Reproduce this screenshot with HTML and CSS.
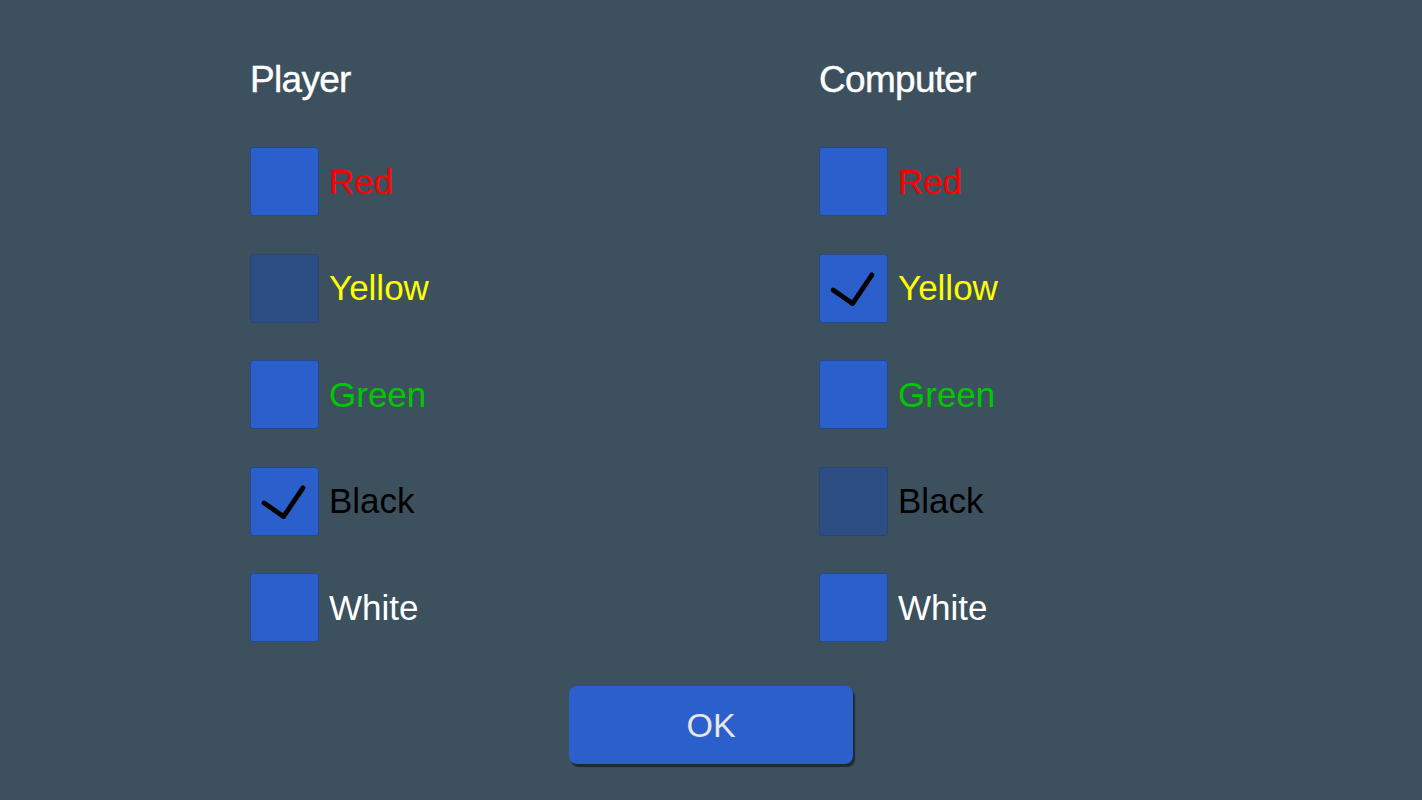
FILE: index.html
```html
<!DOCTYPE html>
<html>
<head>
<meta charset="utf-8">
<link rel="stylesheet" href="styles.css">
</head>
<body>
<div class="page">
  <div class="columns">
    <div class="col">
      <div class="title">Player</div>
      <div class="list">
        <div class="row"><div class="box"></div><span class="label red">Red</span></div>
        <div class="row"><div class="box dim"></div><span class="label yellow">Yellow</span></div>
        <div class="row"><div class="box"></div><span class="label green">Green</span></div>
        <div class="row"><div class="box"><svg class="check" viewBox="0 0 69 69"><polyline points="13.5,36 33.5,50 53.5,20.5"/></svg></div><span class="label black">Black</span></div>
        <div class="row"><div class="box"></div><span class="label white">White</span></div>
      </div>
    </div>
    <div class="col">
      <div class="title">Computer</div>
      <div class="list">
        <div class="row"><div class="box"></div><span class="label red">Red</span></div>
        <div class="row"><div class="box"><svg class="check" viewBox="0 0 69 69"><polyline points="13.5,36 33.5,50 53.5,20.5"/></svg></div><span class="label yellow">Yellow</span></div>
        <div class="row"><div class="box"></div><span class="label green">Green</span></div>
        <div class="row"><div class="box dim"></div><span class="label black">Black</span></div>
        <div class="row"><div class="box"></div><span class="label white">White</span></div>
      </div>
    </div>
  </div>
  <div class="actions">
    <button class="ok">OK</button>
  </div>
</div>
</body>
</html>
```
FILE: styles.css
```css
html, body {
  margin: 0;
  padding: 0;
  background: #3d505e;
  height: 100%;
  overflow: hidden;
}
.page {
  width: 1422px;
  height: 800px;
  font-family: "Liberation Sans", Arial, sans-serif;
  padding-top: 60px;
  box-sizing: border-box;
}
.columns {
  display: flex;
  padding-left: 250px;
}
.col {
  width: 569px;
}
.title {
  color: #ffffff;
  font-size: 37px;
  line-height: 40px;
  height: 40px;
  letter-spacing: -0.7px;
  -webkit-text-stroke: 0.4px #ffffff;
}
.list {
  margin-top: 47px;
  display: flex;
  flex-direction: column;
  gap: 37.5px;
}
.row {
  display: flex;
  align-items: center;
  height: 69px;
}
.box {
  width: 69px;
  height: 69px;
  box-sizing: border-box;
  background: #2b5fcc;
  border: 1px solid #24498f;
  border-radius: 3px;
  flex: none;
}
.box.dim {
  background: #2d4e85;
  border-color: #2a4574;
}
.check {
  display: block;
  width: 67px;
  height: 67px;
}
.check polyline {
  fill: none;
  stroke: #000000;
  stroke-width: 5;
  stroke-linecap: round;
  stroke-linejoin: round;
}
.label {
  margin-left: 10px;
  font-size: 35px;
  line-height: 40px;
}
.red { color: #ff0000; }
.yellow { color: #ffff00; }
.green { color: #00c800; }
.black { color: #000000; }
.white { color: #ffffff; }
.actions {
  display: flex;
  justify-content: center;
  margin-top: 44px;
}
.ok {
  width: 284px;
  height: 78px;
  background: #2b5fcc;
  border: none;
  border-radius: 8px;
  box-shadow: 2px 3px 1px #1e2a33;
  color: #e6e6e6;
  font-family: "Liberation Sans", Arial, sans-serif;
  font-size: 34px;
  padding: 0;
}
```
